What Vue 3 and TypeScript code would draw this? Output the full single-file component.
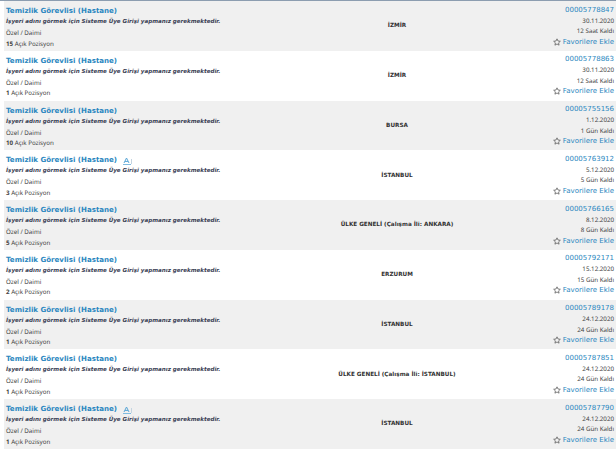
<script setup lang="ts">
interface Row { no: string; date: string; left: string; city: string; count: number; icon?: boolean }
const rows: Row[] = [
  { no: '00005778847', date: '30.11.2020', left: '12 Saat Kaldı', city: 'İZMİR', count: 15 },
  { no: '00005778863', date: '30.11.2020', left: '12 Saat Kaldı', city: 'İZMİR', count: 1 },
  { no: '00005755156', date: '1.12.2020', left: '1 Gün Kaldı', city: 'BURSA', count: 10 },
  { no: '00005763912', date: '5.12.2020', left: '5 Gün Kaldı', city: 'İSTANBUL', count: 3, icon: true },
  { no: '00005766165', date: '8.12.2020', left: '8 Gün Kaldı', city: 'ÜLKE GENELİ (Çalışma İli: ANKARA)', count: 5 },
  { no: '00005792171', date: '15.12.2020', left: '15 Gün Kaldı', city: 'ERZURUM', count: 2 },
  { no: '00005789178', date: '24.12.2020', left: '24 Gün Kaldı', city: 'İSTANBUL', count: 1 },
  { no: '00005787851', date: '24.12.2020', left: '24 Gün Kaldı', city: 'ÜLKE GENELİ (Çalışma İli: İSTANBUL)', count: 1 },
  { no: '00005787790', date: '24.12.2020', left: '24 Gün Kaldı', city: 'İSTANBUL', count: 1, icon: true },
]
</script>

<template>
  <div class="list">
    <div v-for="r in rows" :key="r.no" class="row">
      <div class="main">
        <div class="title">
          <span>Temizlik Görevlisi (Hastane)</span>
          <svg v-if="r.icon" class="ico" width="10" height="8" viewBox="0 0 10 8">
            <path d="M1 6 L3.5 1 L6 6 M2 4.4 H5" fill="none" stroke="#5aa6d6" stroke-width="1" />
            <path d="M0 7.5 H8" stroke="#7fbbe0" stroke-width="1" />
            <path d="M8.5 2 V7" stroke="#c4d4e0" stroke-width="1" />
          </svg>
        </div>
        <div class="company">İşyeri adını görmek için Sisteme Üye Girişi yapmanız gerekmektedir.</div>
        <div class="small">Özel / Daimi</div>
        <div class="small"><b>{{ r.count }}</b> Açık Pozisyon</div>
      </div>
      <div class="city">{{ r.city }}</div>
      <div class="side">
        <div class="no">{{ r.no }}</div>
        <div class="small">{{ r.date }}</div>
        <div class="small">{{ r.left }}</div>
        <div class="fav">
          <svg width="8" height="8" viewBox="0 0 24 24">
            <path d="M12 2.5 L15 9 L22 9.8 L16.8 14.6 L18.2 21.5 L12 18 L5.8 21.5 L7.2 14.6 L2 9.8 L9 9 Z" fill="none" stroke="#555" stroke-width="2.2" />
          </svg>
          <span>Favorilere Ekle</span>
        </div>
      </div>
    </div>
  </div>
</template>

<style scoped>
.list {
  width: 616px;
  height: 452px;
  overflow: hidden;
  padding-left: 4px;
  box-sizing: border-box;
  border-top: 1px solid #8c9db0;
  font-family: "DejaVu Sans", Verdana, sans-serif;
  color: #333;
  text-rendering: geometricPrecision;
}
.row {
  display: grid;
  grid-template-columns: 232px 1fr 132px;
  height: 49.75px;
  padding: 0 2px;
  box-sizing: border-box;
  overflow: hidden;
}
.row:nth-child(odd) { background: #f0f0f0; }
.main, .side {
  display: flex;
  flex-direction: column;
  padding-top: 3px;
}
.side { align-items: flex-end; padding-top: 2.5px; }
.title {
  display: flex;
  align-items: center;
  gap: 6px;
  height: 13px;
  font-size: 7.05px;
  font-weight: bold;
  color: #2b87c0;
  white-space: nowrap;
}
.ico { margin-top: 2px; }
.company {
  height: 11px;
  line-height: 11px;
  font-size: 5.57px;
  font-weight: bold;
  font-style: italic;
  color: #3a4154;
  white-space: nowrap;
}
.small {
  height: 10.5px;
  line-height: 10.5px;
  font-family: "Noto Sans", "Open Sans", sans-serif;
  font-size: 6.2px;
  color: #444;
  white-space: nowrap;
}
.city {
  align-self: center;
  text-align: center;
  padding-left: 74px;
  margin-top: 1px;
  font-size: 5.7px;
  font-weight: bold;
  color: #333;
  white-space: nowrap;
}
.no {
  height: 12px;
  line-height: 12px;
  font-size: 7px;
  color: #2b87c0;
  white-space: nowrap;
}
.fav {
  display: flex;
  align-items: center;
  gap: 2px;
  height: 10px;
  font-size: 7px;
  color: #2b87c0;
  white-space: nowrap;
}
</style>
